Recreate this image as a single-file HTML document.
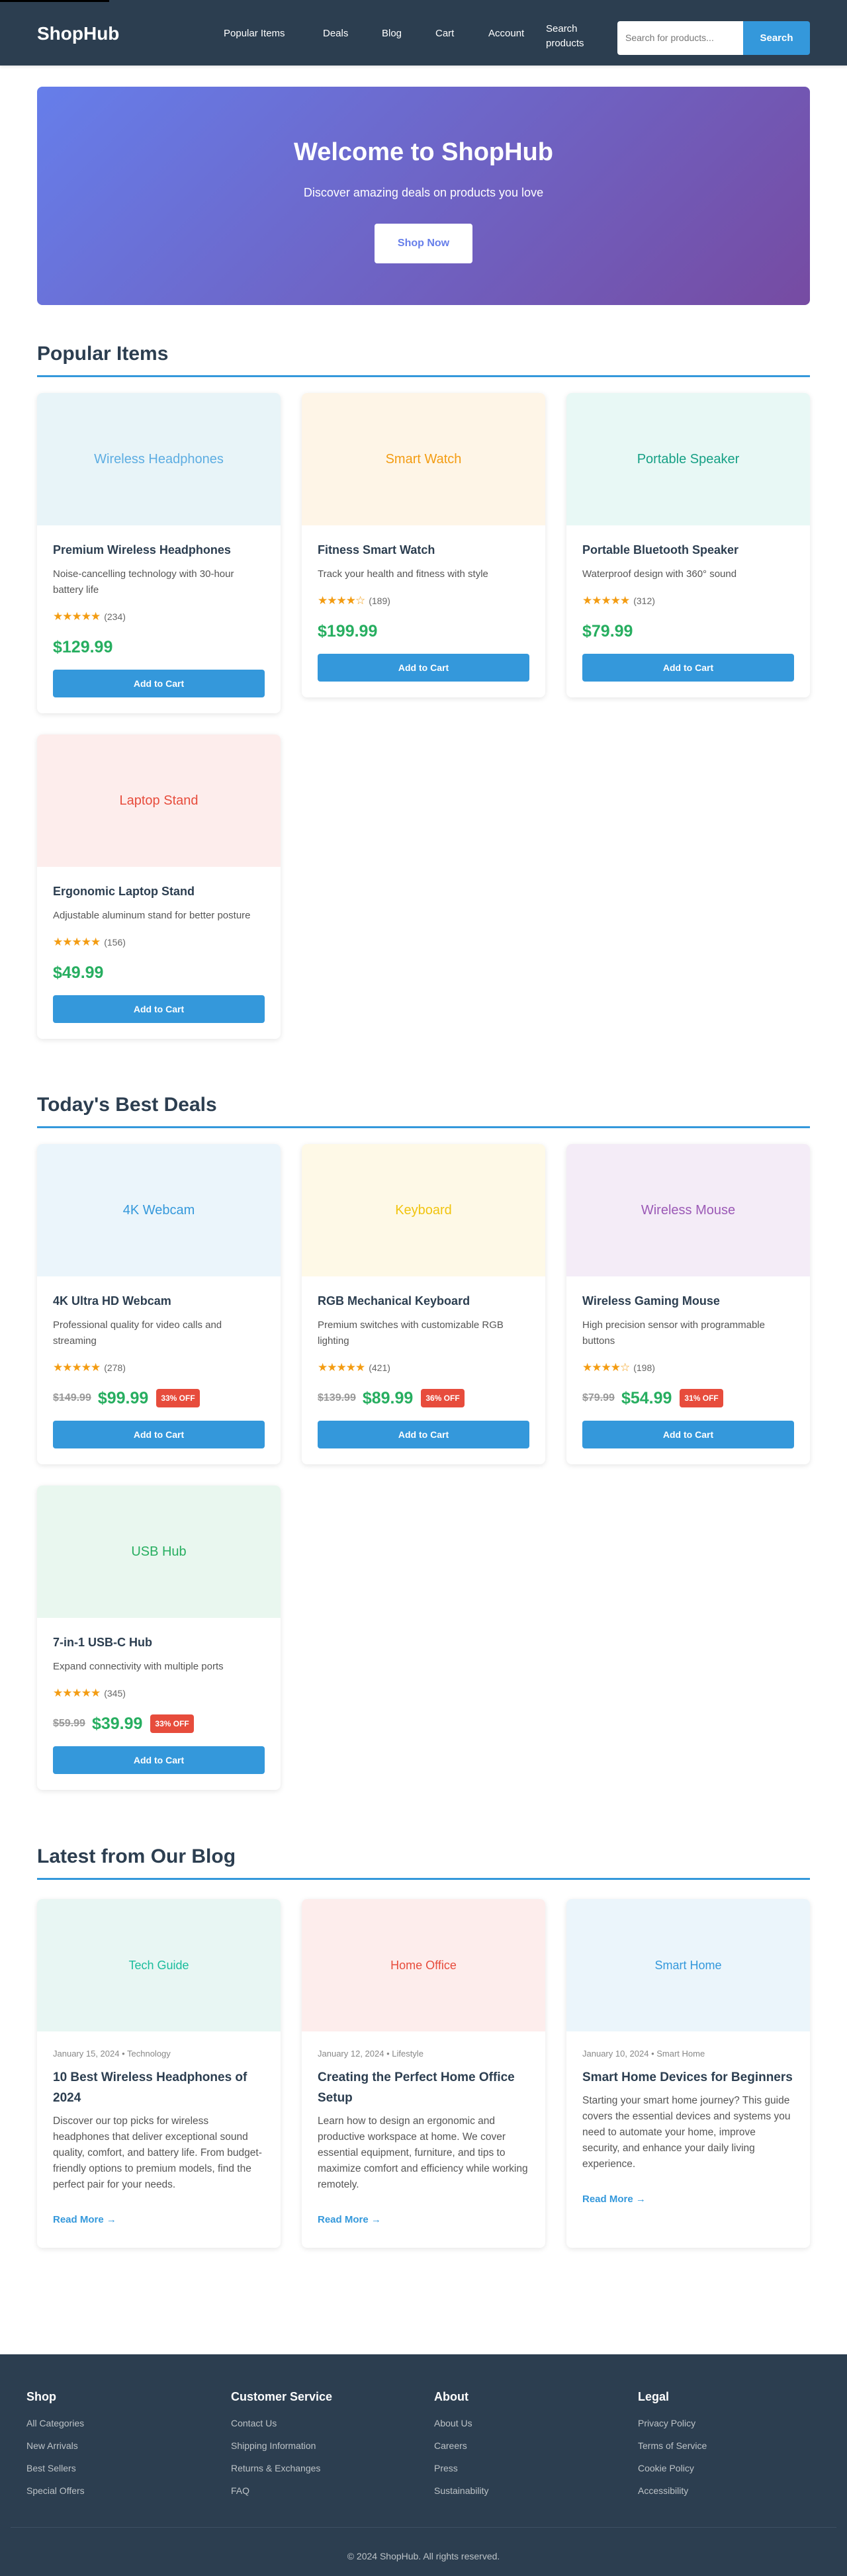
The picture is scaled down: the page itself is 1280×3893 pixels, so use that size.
<!DOCTYPE html>
<html><head><meta charset="utf-8"><style>
*{box-sizing:border-box;margin:0;padding:0}
body{width:1280px;height:3893px;font-family:"Liberation Sans",Arial,sans-serif;background:#fff;color:#2c3e50;position:relative;overflow:hidden}
.topbar{position:absolute;left:0;top:0;width:165px;height:3px;background:#000;z-index:5}
nav{position:absolute;left:0;top:0;width:1280px;height:99px;background:#2c3e50;box-shadow:0 2px 4px rgba(0,0,0,.1)}
.logo{position:absolute;left:56px;top:34px;font-size:28px;font-weight:bold;color:#fff;line-height:34px}
.nl{position:absolute;top:41px;font-size:15px;color:#fff;line-height:20px;font-weight:500}
.srch{position:absolute;left:933px;top:32px;width:190px;height:51px;background:#fff;border-radius:4px 0 0 4px;font-size:14px;color:#777;padding:17px 0 0 12px}
.sbtn{position:absolute;left:1123px;top:32px;width:101px;height:51px;background:#3498db;border-radius:0 4px 4px 0;color:#fff;font-weight:bold;font-size:15px;text-align:center;line-height:51px}
.hero{position:absolute;left:56px;top:131px;width:1168px;height:330px;border-radius:8px;background:linear-gradient(135deg,#667eea,#764ba2);text-align:center;color:#fff}
.hero h1{position:absolute;top:76px;width:100%;font-size:38px;line-height:46px}
.hero p{position:absolute;top:148px;width:100%;font-size:18px;line-height:24px}
.hero a{position:absolute;left:510px;top:207px;width:148px;height:60px;background:#fff;color:#667eea;border-radius:4px;font-size:16px;font-weight:600;line-height:60px;text-decoration:none}
.sec{position:absolute;left:56px;width:1168px}
.sec h2{font-size:30px;line-height:36px;font-weight:bold;color:#2c3e50;padding-bottom:14px;border-bottom:3px solid #3498db}
.grid{display:grid;grid-template-columns:repeat(3,368px);gap:32px;margin-top:24px;align-items:start}
.card{background:#fff;border-radius:8px;box-shadow:0 2px 8px rgba(0,0,0,.1);overflow:hidden}
.img{height:200px;display:flex;align-items:center;justify-content:center;font-size:20px}
.body{padding:24px}
.t{font-size:18px;font-weight:bold;line-height:27px;margin-bottom:11px;color:#2c3e50}
.d{font-size:15px;line-height:24px;color:#555;margin-bottom:16px}
.st{font-size:17px;line-height:24px;color:#f39c12;margin-bottom:16px;letter-spacing:-1px}
.st span{color:#666;font-size:14px;letter-spacing:0;margin-left:6px}
.pr{font-size:25px;line-height:36px;font-weight:bold;color:#27ae60;margin-bottom:16px;display:flex;align-items:center}
.pr s{font-size:16px;color:#999;font-weight:bold;margin-right:10px}
.pr b{background:#e74c3c;color:#fff;font-size:12px;border-radius:4px;padding:6px 7px;line-height:16px;margin-left:12px}
.btn{height:42px;background:#3498db;color:#fff;border-radius:4px;text-align:center;font-weight:bold;font-size:14px;line-height:42px}
.bc{height:527px}
.date{font-size:13px;color:#888;line-height:20px;margin-bottom:10px}
.bt{font-size:19px;font-weight:bold;line-height:31px;margin-bottom:8px;color:#2c3e50}
.bd{font-size:15.5px;line-height:24px;color:#555}
.rm{margin-top:32px;color:#3498db;font-weight:bold;font-size:15px}
footer{position:absolute;left:0;top:3558px;width:1280px;height:335px;background:#2c3e50;color:#fff}
.fc{position:absolute;top:52px}
.fc h3{font-size:18px;line-height:24px;margin-bottom:18px}
.fc div{font-size:14px;color:#bdc3c7;line-height:20px;margin-bottom:14px}
.hr{position:absolute;left:16px;top:261px;width:1248px;height:1px;background:#3d4f63}
.cp{position:absolute;top:297px;width:100%;text-align:center;font-size:14px;color:#bdc3c7}
</style></head><body>
<div class="topbar"></div>
<nav>
<div class="logo">ShopHub</div>
<div class="nl" style="left:338px">Popular Items</div>
<div class="nl" style="left:488px">Deals</div>
<div class="nl" style="left:577px">Blog</div>
<div class="nl" style="left:658px">Cart</div>
<div class="nl" style="left:738px">Account</div>
<div class="nl" style="left:825px;top:33px;line-height:22px">Search<br>products</div>
<div class="srch">Search for products...</div>
<div class="sbtn">Search</div>
</nav>
<div class="hero">
<h1>Welcome to ShopHub</h1>
<p>Discover amazing deals on products you love</p>
<a>Shop Now</a>
</div>

<div class="sec" style="top:517px">
<h2>Popular Items</h2>
<div class="grid">
<div class="card"><div class="img" style="background:#e8f4f8;color:#5dade2">Wireless Headphones</div><div class="body"><div class="t">Premium Wireless Headphones</div><div class="d">Noise-cancelling technology with 30-hour battery life</div><div class="st">★★★★★<span>(234)</span></div><div class="pr">$129.99</div><div class="btn">Add to Cart</div></div></div>
<div class="card"><div class="img" style="background:#fef5e7;color:#f39c12">Smart Watch</div><div class="body"><div class="t">Fitness Smart Watch</div><div class="d">Track your health and fitness with style</div><div class="st">★★★★☆<span>(189)</span></div><div class="pr">$199.99</div><div class="btn">Add to Cart</div></div></div>
<div class="card"><div class="img" style="background:#e8f8f5;color:#16a085">Portable Speaker</div><div class="body"><div class="t">Portable Bluetooth Speaker</div><div class="d">Waterproof design with 360° sound</div><div class="st">★★★★★<span>(312)</span></div><div class="pr">$79.99</div><div class="btn">Add to Cart</div></div></div>
<div class="card"><div class="img" style="background:#fdedec;color:#e74c3c">Laptop Stand</div><div class="body"><div class="t">Ergonomic Laptop Stand</div><div class="d">Adjustable aluminum stand for better posture</div><div class="st">★★★★★<span>(156)</span></div><div class="pr">$49.99</div><div class="btn">Add to Cart</div></div></div>
</div></div>

<div class="sec" style="top:1652px">
<h2>Today's Best Deals</h2>
<div class="grid">
<div class="card"><div class="img" style="background:#ebf5fb;color:#3498db">4K Webcam</div><div class="body"><div class="t">4K Ultra HD Webcam</div><div class="d">Professional quality for video calls and streaming</div><div class="st">★★★★★<span>(278)</span></div><div class="pr"><s>$149.99</s>$99.99<b>33% OFF</b></div><div class="btn">Add to Cart</div></div></div>
<div class="card"><div class="img" style="background:#fef9e7;color:#f1c40f">Keyboard</div><div class="body"><div class="t">RGB Mechanical Keyboard</div><div class="d">Premium switches with customizable RGB lighting</div><div class="st">★★★★★<span>(421)</span></div><div class="pr"><s>$139.99</s>$89.99<b>36% OFF</b></div><div class="btn">Add to Cart</div></div></div>
<div class="card"><div class="img" style="background:#f4ecf7;color:#9b59b6">Wireless Mouse</div><div class="body"><div class="t">Wireless Gaming Mouse</div><div class="d">High precision sensor with programmable buttons</div><div class="st">★★★★☆<span>(198)</span></div><div class="pr"><s>$79.99</s>$54.99<b>31% OFF</b></div><div class="btn">Add to Cart</div></div></div>
<div class="card"><div class="img" style="background:#e9f7ef;color:#27ae60">USB Hub</div><div class="body"><div class="t">7-in-1 USB-C Hub</div><div class="d">Expand connectivity with multiple ports</div><div class="st">★★★★★<span>(345)</span></div><div class="pr"><s>$59.99</s>$39.99<b>33% OFF</b></div><div class="btn">Add to Cart</div></div></div>
</div></div>

<div class="sec" style="top:2788px">
<h2>Latest from Our Blog</h2>
<div class="grid" style="margin-top:29px">
<div class="card bc"><div class="img" style="background:#e8f6f3;color:#1abc9c;font-size:18px">Tech Guide</div><div class="body"><div class="date">January 15, 2024 • Technology</div><div class="bt">10 Best Wireless Headphones of 2024</div><div class="bd">Discover our top picks for wireless headphones that deliver exceptional sound quality, comfort, and battery life. From budget-friendly options to premium models, find the perfect pair for your needs.</div><div class="rm">Read More →</div></div></div>
<div class="card bc"><div class="img" style="background:#fdedec;color:#e74c3c;font-size:18px">Home Office</div><div class="body"><div class="date">January 12, 2024 • Lifestyle</div><div class="bt">Creating the Perfect Home Office Setup</div><div class="bd">Learn how to design an ergonomic and productive workspace at home. We cover essential equipment, furniture, and tips to maximize comfort and efficiency while working remotely.</div><div class="rm">Read More →</div></div></div>
<div class="card bc"><div class="img" style="background:#ebf5fb;color:#3498db;font-size:18px">Smart Home</div><div class="body"><div class="date">January 10, 2024 • Smart Home</div><div class="bt">Smart Home Devices for Beginners</div><div class="bd">Starting your smart home journey? This guide covers the essential devices and systems you need to automate your home, improve security, and enhance your daily living experience.</div><div class="rm">Read More →</div></div></div>
</div></div>

<footer>
<div class="fc" style="left:40px"><h3>Shop</h3><div>All Categories</div><div>New Arrivals</div><div>Best Sellers</div><div>Special Offers</div></div>
<div class="fc" style="left:349px"><h3>Customer Service</h3><div>Contact Us</div><div>Shipping Information</div><div>Returns &amp; Exchanges</div><div>FAQ</div></div>
<div class="fc" style="left:656px"><h3>About</h3><div>About Us</div><div>Careers</div><div>Press</div><div>Sustainability</div></div>
<div class="fc" style="left:964px"><h3>Legal</h3><div>Privacy Policy</div><div>Terms of Service</div><div>Cookie Policy</div><div>Accessibility</div></div>
<div class="hr"></div>
<div class="cp">© 2024 ShopHub. All rights reserved.</div>
</footer>
</body></html>
